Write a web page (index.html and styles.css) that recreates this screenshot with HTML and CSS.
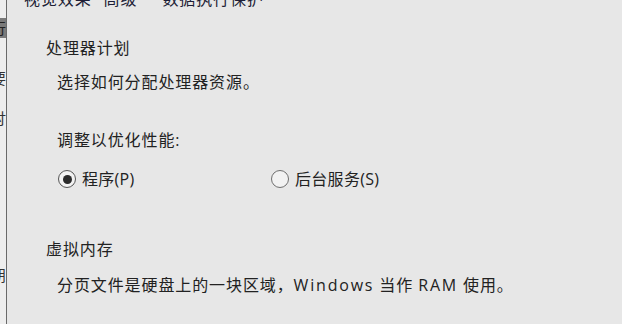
FILE: index.html
```html
<!DOCTYPE html>
<html lang="zh-CN">
<head>
<meta charset="utf-8">
<title>性能选项</title>
<link rel="stylesheet" href="styles.css">
</head>
<body>
<div class="screen">
  <div class="side">
    <div class="side-text">
      <span class="s1">行</span>
      <span class="s2">要</span>
      <span class="s3">忖</span>
      <span class="s4">朋</span>
    </div>
  </div>
  <div class="dialog">
    <div class="tabs">
      <span class="tab t1">视觉效果</span>
      <span class="tab t2">高级</span>
      <span class="tab t3">数据执行保护</span>
    </div>
    <div class="group-title g1">处理器计划</div>
    <div class="desc d1">选择如何分配处理器资源。</div>
    <div class="desc d2">调整以优化性能:</div>
    <div class="radios">
      <label class="radio r1"><span class="dot checked"></span>程序(P)</label>
      <label class="radio r2"><span class="dot"></span>后台服务(S)</label>
    </div>
    <div class="group-title g2">虚拟内存</div>
    <div class="desc d3">分页文件是硬盘上的一块区域，<span class="latin">Windows</span> 当作 <span class="latin">RAM</span> 使用。</div>
  </div>
</div>
</body>
</html>
```
FILE: styles.css
```css
html, body {
  margin: 0;
  padding: 0;
  width: 622px;
  height: 324px;
  overflow: hidden;
  background: #e7e7e7;
}
.screen {
  display: flex;
  width: 622px;
  height: 324px;
  font-family: "Open Sans", "Noto Sans CJK SC", sans-serif;
  font-size: 16px;
  line-height: 24px;
  letter-spacing: 0.9px;
  color: #222222;
}
.side {
  width: 6px;
  flex: none;
  background: #eeeeee;
  border-right: 1px solid #6a6a6a;
  overflow: hidden;
}
.side-text {
  display: flex;
  flex-direction: column;
  margin-left: -9px;
  color: #333;
  font-size: 15px;
  line-height: 20px;
  letter-spacing: 0;
}
.side-text span { display: block; height: 20px; }
.s1 { margin-top: 18px; background: #7a7a7a; color: #222; }
.s2 { margin-top: 30px; }
.s3 { margin-top: 20px; }
.s4 { margin-top: 137px; }
.dialog {
  flex: 1;
  display: flex;
  flex-direction: column;
  background: #e7e7e7;
}
.tabs {
  display: flex;
  margin-top: -13px;
  padding-left: 17px;
  height: 24px;
  color: #1e1e36;
}
.tab.t2 { margin-left: 12px; }
.tab.t3 { margin-left: 25px; }
.group-title { padding-left: 39px; }
.desc { padding-left: 50px; }
.g1 { margin-top: 25px; }
.d1 { margin-top: 10px; }
.d2 { margin-top: 34px; }
.radios {
  display: flex;
  margin-top: 15px;
  padding-left: 51px;
  letter-spacing: 0.3px;
}
.radio {
  display: flex;
  align-items: center;
  gap: 6px;
}
.r1 { width: 213px; }
.dot {
  width: 18px;
  height: 18px;
  border: 1px solid #6f6f6f;
  border-radius: 50%;
  background: #f2f2f2;
  box-sizing: border-box;
  display: flex;
  align-items: center;
  justify-content: center;
}
.dot.checked { border-color: #555; }
.dot.checked::after {
  content: "";
  width: 9px;
  height: 9px;
  border-radius: 50%;
  background: #2a2a2a;
}
.g2 { margin-top: 46px; }
.d3 { margin-top: 12px; }
.latin { letter-spacing: 1.8px; }
```
